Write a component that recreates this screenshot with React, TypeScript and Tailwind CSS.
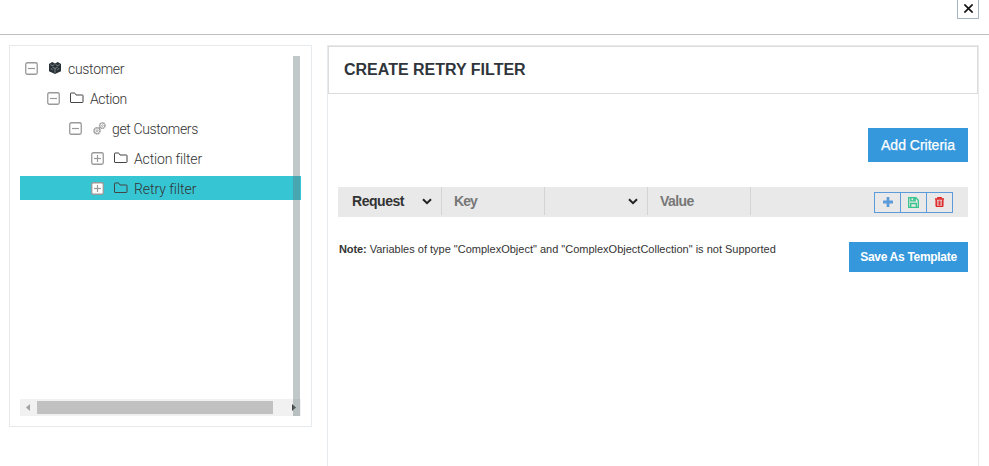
import React from "react";

const Toggle = ({ open }: { open?: boolean }) => (
  <svg className="size-[13px] shrink-0" viewBox="0 0 13 13" fill="none">
    <rect x="0.75" y="0.75" width="11.5" height="11.5" rx="1.5" fill="#fff" stroke="#999" strokeWidth="1.3" />
    <path d="M3 6.5h7" stroke="#999" strokeWidth="1.2" />
    {!open && <path d="M6.5 3v7" stroke="#999" strokeWidth="1.2" />}
  </svg>
);

const Folder = () => (
  <svg className="mt-[-1px] h-[12px] w-[14px] shrink-0" viewBox="0 0 14 12" fill="none">
    <path
      d="M.5 1.5V10q0 .5.5.5h11.5q.5 0 .5-.5V3.5q0-.5-.5-.5H6L5 1.3Q4.8 1 4.4 1H1q-.5 0-.5.5Z"
      stroke="#444"
      strokeWidth="1"
    />
  </svg>
);

const Cubes = () => (
  <svg className="h-[12px] w-[12px] shrink-0" viewBox="0 0 12 12">
    <path d="M0 2 3.2 0 6 1.4 8.8 0 12 2v7.2L6 12 0 9.2Z" fill="#263035" />
    <path d="m1.3 2.7 2 1 2-1.1M6.7 2.6l2 1.1 2-1M3.5 5.2 6 6.6l2.6-1.4M6 7v3.7M2 6.2l1.5 2M9.9 6.2l-1.5 2" stroke="#a4adb0" strokeWidth=".7" fill="none" />
  </svg>
);

const Gears = () => (
  <svg className="h-[13px] w-[13px] shrink-0" viewBox="0 0 13 13" fill="none" stroke="#9b9b9b">
    <circle cx="4" cy="8.8" r="3" strokeWidth="1.6" strokeDasharray="1.7 .3" />
    <circle cx="4" cy="8.8" r="1" strokeWidth=".9" />
    <circle cx="9.3" cy="3.6" r="2.7" strokeWidth="1.5" strokeDasharray="1.6 .3" />
    <circle cx="9.3" cy="3.6" r=".8" strokeWidth=".8" />
    <path d="m6 6.5 1.3-1" strokeWidth="1.5" />
  </svg>
);

const Chevron = () => (
  <svg className="h-[7px] w-[10px] shrink-0" viewBox="0 0 10 7" fill="none">
    <path d="m1 1.2 4 4 4-4" stroke="#222" strokeWidth="2" />
  </svg>
);

const Plus = () => (
  <svg className="mt-[-2px] size-[10px]" viewBox="0 0 10 10">
    <path d="M3.6.5q0-.5.5-.5h1.8q.5 0 .5.5v3.1h3.1q.5 0 .5.5v1.8q0 .5-.5.5H6.4v3.1q0 .5-.5.5H4.1q-.5 0-.5-.5V6.4H.5Q0 6.4 0 5.9V4.1q0-.5.5-.5h3.1Z" fill="#5b9bd9" />
  </svg>
);

const Save = () => (
  <svg className="mt-[-1px] size-[11px]" viewBox="0 0 11 11" fill="none" stroke="#35c48d" strokeWidth="1.3">
    <path d="M.7.7h7.1l2.5 2.5v7.1H.7Z" />
    <path d="M2.7 10V6.5h5.6V10M2.8.8v3h4.4v-3" />
    <path d="M5.9 1v2" strokeWidth="1.5" />
  </svg>
);

const Trash = () => (
  <svg className="mt-[-1px] h-[10px] w-[9px]" viewBox="0 0 9 10" fill="none" stroke="#e02424">
    <path d="M0 2h9" strokeWidth="1.5" />
    <path d="M2.8 2V.6h3.4V2" strokeWidth="1.2" />
    <path d="M1.2 2.5v6.1q0 .8.8.8h5q.8 0 .8-.8V2.5" strokeWidth="1.5" />
    <path d="M3.1 3.5v5M4.5 3.5v5M5.9 3.5v5" strokeWidth=".9" />
  </svg>
);

const rows = [
  { label: "customer", pad: "pl-[5px]", gap: "gap-[11px]", text: "ml-[-4px] tracking-[-0.3px]", icon: <Cubes />, open: true },
  { label: "Action", pad: "pl-[27px]", gap: "gap-[10px]", text: "ml-[-4px] tracking-[-0.4px]", icon: <Folder />, open: true },
  { label: "get Customers", pad: "pl-[49px]", gap: "gap-[11px]", text: "ml-[-5px] tracking-[-0.35px]", icon: <Gears />, open: true },
  { label: "Action filter", pad: "pl-[71px]", gap: "gap-[10px]", text: "ml-[-4px] tracking-[-0.15px]", icon: <Folder />, open: false },
  { label: "Retry filter", pad: "pl-[71px]", gap: "gap-[10px]", text: "ml-[-4px] tracking-[-0.05px]", icon: <Folder />, open: false, active: true },
];

export default function App() {
  return (
    <div className="flex h-[466px] w-[989px] flex-col overflow-hidden bg-white font-['Liberation_Sans',Arial,sans-serif] text-[#333]">
      <header className="flex h-[35px] shrink-0 items-start justify-end border-b border-[#bfbfbf] pr-[10px]">
        <button className="flex h-[19px] w-[22px] items-center justify-center border border-t-0 border-[#a5b4c0]">
          <svg className="mt-[-1px] size-[9px]" viewBox="0 0 9 9" stroke="#111" strokeWidth="1.6">
            <path d="m.4.4 8.2 8.2M8.6.4.4 8.6" />
          </svg>
        </button>
      </header>
      <main className="flex min-h-0 flex-1 items-start gap-[15px] pl-[9px] pt-[10px]">
        <aside className="h-[382px] w-[303px] shrink-0 border border-[#e7eaec] p-[10px]">
          <div className="relative flex h-[360px] w-[281px] flex-col">
            <ul className="flex flex-1 flex-col gap-[6px] font-[Roboto,'Open_Sans',sans-serif] text-[14px] font-light">
              {rows.map((r) => (
                <li key={r.label} className={`flex h-6 items-center ${r.pad} ${r.gap} ${r.active ? "bg-[#36c6d3]" : ""}`}>
                  <Toggle open={r.open} />
                  {r.icon}
                  <span className={`mt-[2px] whitespace-nowrap ${r.text}`}>{r.label}</span>
                </li>
              ))}
            </ul>
            <div className="flex h-[17px] items-center bg-[#f1f1f1] pl-[6px] pr-[5px]">
              <svg className="h-[7px] w-[4px]" viewBox="0 0 4 7"><path d="M4 0v7L0 3.5Z" fill="#a3a3a3" /></svg>
              <span className="ml-[7px] h-[13px] w-[236px] bg-[#c1c1c1]" />
              <svg className="ml-auto h-[7px] w-[4px]" viewBox="0 0 4 7"><path d="M0 0v7l4-3.5Z" fill="#444" /></svg>
            </div>
            <span className="absolute right-[1px] top-0 h-[360px] w-[7px] bg-[#61757a]/40" />
          </div>
        </aside>
        <section className="h-[421px] w-[652px] shrink-0 border border-b-0 border-[#e7eaec]">
          <h1 className="flex h-[48px] items-center border border-[#dcdcdc] pl-[15px] text-[16px] font-bold text-[#2f353b]">
            CREATE RETRY FILTER
          </h1>
          <div className="flex flex-col items-end px-[10px] pt-[34px]">
            <button className="h-[34px] w-[100px] whitespace-nowrap bg-[#3598dc] text-[14px] text-white [-webkit-text-stroke:0.25px_white]">
              Add Criteria
            </button>
            <div className="mt-[25px] flex h-[30px] w-full items-start bg-[#e9e9e9] text-[14px] font-bold">
              <div className="flex h-7 w-[104px] items-center justify-between border-r border-[#d4d4d4] pl-[14px] pr-[9px] tracking-[-0.45px]">
                <span className="mt-px">Request</span>
                <Chevron />
              </div>
              <div className="flex h-7 w-[103px] items-center border-r border-[#d4d4d4] pl-[12px] pt-px tracking-[-0.9px] text-[#777]">Key</div>
              <div className="flex h-7 w-[103px] items-center justify-end border-r border-[#d4d4d4] pr-[9px]">
                <Chevron />
              </div>
              <div className="flex h-7 w-[103px] items-center border-r border-[#d4d4d4] pl-[12px] pt-px tracking-[-0.6px] text-[#777]">Value</div>
              <div className="ml-auto mr-[15px] mt-[5px] flex h-[21px] w-[79px] divide-x divide-[#5b9bd9] border border-[#5b9bd9]">
                <button className="flex flex-1 items-center justify-center"><Plus /></button>
                <button className="flex flex-1 items-center justify-center"><Save /></button>
                <button className="flex flex-1 items-center justify-center"><Trash /></button>
              </div>
            </div>
            <div className="mt-[25px] flex w-full items-start justify-between">
              <p className="whitespace-nowrap pl-px text-[11px] leading-[15px]">
                <b className="tracking-[-0.1px]">Note:</b> Variables of type "ComplexObject" and "ComplexObjectCollection" is not Supported
              </p>
              <button className="h-[30px] w-[119px] whitespace-nowrap bg-[#3598dc] text-[12px] font-bold tracking-[-0.3px] text-white">
                Save As Template
              </button>
            </div>
          </div>
        </section>
      </main>
    </div>
  );
}
